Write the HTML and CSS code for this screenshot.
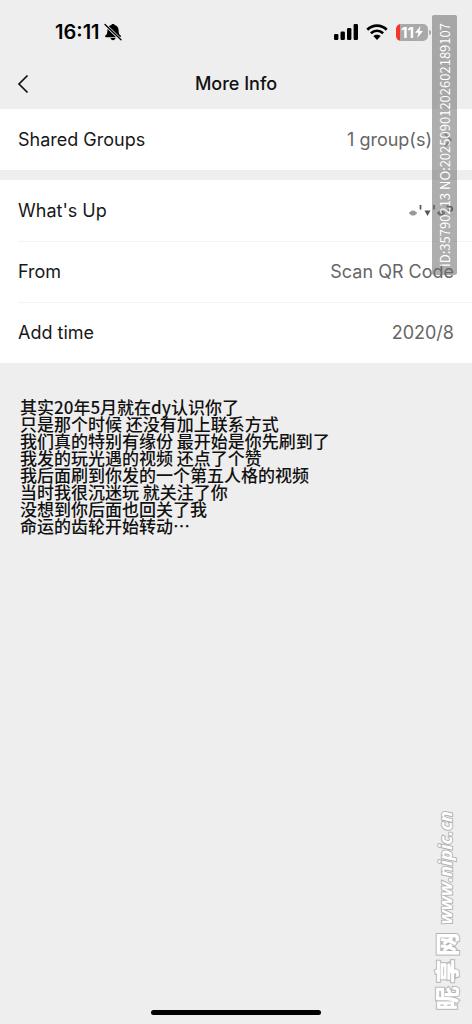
FILE: index.html
```html
<!DOCTYPE html>
<html lang="en">
<head>
<meta charset="utf-8">
<meta name="viewport" content="width=device-width, initial-scale=1">
<title>More Info</title>
<link rel="stylesheet" href="styles.css">
</head>
<body>
<div class="screen">
  <div class="status">
    <div class="status-group">
      <span class="clock">16:11</span>
      <svg class="bell" viewBox="0 0 18 18" width="18" height="18" aria-hidden="true">
        <path d="M9 1C8 1 7.400 1.500 7.300 2C4.600 2.700 3.400 4.800 3.400 7.300C3.400 10.500 2.800 11.500 1.400 12.500C.8 13.100 1 14.200 2 14.200H16C17 14.200 17.200 13.100 16.600 12.500C15.200 11.500 14.600 10.500 14.600 7.300C14.600 4.800 13.400 2.700 10.700 2C10.600 1.500 10 1 9 1Z"/>
        <path d="M6.500 15H11.500C11.200 16.400 10.300 17.200 9 17.200S6.800 16.400 6.500 15Z"/>
        <path d="M1 1.500L17 17" stroke="#eee" stroke-width="3"/>
        <path d="M1 1.500L17 16.800" stroke="#000" stroke-width="1.300" stroke-linecap="round"/>
      </svg>
    </div>
    <div class="status-group status-right">
      <svg viewBox="0 0 24 16" width="24" height="16" aria-hidden="true">
        <rect x="0" y="10" width="4.400" height="6" rx="1.200"/><rect x="6.500" y="7.500" width="4.400" height="8.500" rx="1.200"/><rect x="13" y="4" width="4.400" height="12" rx="1.200"/><rect x="19.600" y="0" width="4.400" height="16" rx="1.200"/>
      </svg>
      <svg viewBox="0 0 22 16" width="22" height="16" aria-hidden="true">
        <g fill="none" stroke="#000" stroke-width="2.700"><path d="M1.300 5.700C6.700.2 15.300.2 20.700 5.700"/><path d="M4.900 9.300C8.500 5.900 13.500 5.900 17.100 9.300"/></g>
        <path d="M7.300 12.100C9.400 10.200 12.600 10.200 14.700 12.100L11 15.900Z"/>
      </svg>
      <div class="battery"><span class="level">11</span><svg viewBox="0 0 8 12" width="8" height="12" aria-hidden="true"><path d="M5.500 0L0 6.800H3.400L2.300 12L8 4.900H4.600Z" fill="#fff"/></svg></div>
    </div>
  </div>
  <header class="nav">
    <button class="back" type="button" aria-label="Back"><svg viewBox="0 0 12 20" width="12" height="20" aria-hidden="true"><path d="M10.500 1.500L2 10L10.500 18.500" fill="none" stroke="#111" stroke-width="1.700"/></svg></button>
    <h1 class="title">More Info</h1>
  </header>
  <main>
    <div class="card">
      <a class="row" href="#groups"><span>Shared Groups</span><span class="value">1 group(s)<svg class="chevron" viewBox="0 0 8 14" width="8" height="14" aria-hidden="true"><path d="M1 1L7 7L1 13" fill="none" stroke="#999" stroke-width="1.800"/></svg></span></a>
    </div>
    <div class="card">
      <div class="row"><span>What's Up</span><span class="value">
        <svg viewBox="0 0 46 14" width="46" height="14" role="img" aria-label="Smiling face">
          <ellipse cx="5" cy="9" rx="3" ry="2.600" fill="#999"/><path d="M1 9H9" stroke="#999" stroke-width="1.500"/>
          <path d="M12.500 1V5.500M26 1V5.500" stroke="#555" stroke-width="1.700"/>
          <path d="M16.500 6.500H22.500L19.500 12Z" fill="#555"/>
          <ellipse cx="33" cy="9" rx="3" ry="2.600" fill="#666"/><path d="M29 9H37" stroke="#666" stroke-width="1.500"/>
          <path d="M38.500 2.500H42A2.200 2.200 0 1 1 40 5.500" fill="none" stroke="#444" stroke-width="1.700"/>
        </svg></span></div>
      <div class="row"><span>From</span><span class="value">Scan QR Code</span></div>
      <div class="row"><span>Add time</span><span class="value">2020/8</span></div>
    </div>
    <p class="note" lang="zh-CN">其实20年5月就在dy认识你了<br>只是那个时候 还没有加上联系方式<br>我们真的特别有缘份 最开始是你先刷到了<br>我发的玩光遇的视频 还点了个赞<br>我后面刷到你发的一个第五人格的视频<br>当时我很沉迷玩 就关注了你<br>没想到你后面也回关了我<br>命运的齿轮开始转动⋯</p>
  </main>
  <div class="home"></div>
  <div class="stamp">ID:35790213 NO:20250901202602189107</div>
  <div class="brand"><span class="brand-name" lang="zh-CN"><span>昵</span><span>享</span><span>网</span></span><span class="brand-url">www.nipic.cn</span></div>
</div>
</body>
</html>
```
FILE: styles.css
```css
* { box-sizing: border-box; }
body { margin: 0; background: #eee; color: #111; font-family: Inter, "Noto Sans CJK SC", sans-serif; }
.screen { position: relative; display: flex; flex-direction: column; min-height: 100vh; }
main { flex: 1; }
.status { display: flex; justify-content: space-between; align-items: center; height: 59px; padding: 5px 44px 0 55px; }
.status-group { display: flex; align-items: center; }
.status-right { gap: 8px; }
.clock { font-size: 20px; font-weight: 600; line-height: 24px; color: #000; }
.bell { margin-left: 4px; }
.battery { position: relative; display: flex; align-items: center; justify-content: center; gap: 1px; width: 32px; height: 17px; border-radius: 5px; background: linear-gradient(to right, #f5352c 4px, #a9a9a9 4px); color: #fff; }
.battery::after { content: ""; position: absolute; left: 33px; top: 6px; width: 2px; height: 5px; border-radius: 0 2px 2px 0; background: #a9a9a9; }
.level { font-size: 15px; font-weight: 700; line-height: 17px; }
.nav { display: grid; grid-template-columns: 1fr auto 1fr; align-items: center; height: 50px; padding: 0 17px; }
.back { justify-self: start; display: flex; padding: 0; border: 0; background: none; }
.title { margin: 0; font-size: 18px; font-weight: 500; line-height: 24px; }
.card { background: #fff; }
.card + .card { margin-top: 10px; }
.row { position: relative; display: flex; justify-content: space-between; align-items: center; height: 61px; padding: 0 18px; font-size: 18px; line-height: 24px; color: #181818; text-decoration: none; }
.row + .row::before { content: ""; position: absolute; top: 0; left: 18px; right: 0; border-top: 1px solid #f3f3f3; }
.value { display: flex; align-items: center; color: #666; }
.chevron { margin: 0 2px 0 12px; }
.note { margin: 35px 20px; font-family: "Noto Sans CJK SC", sans-serif; font-size: 17px; font-weight: 500; line-height: 17px; color: #111; }
.home { align-self: center; width: 36%; height: 5px; margin-bottom: 9px; border-radius: 3px; background: #000; }
.stamp { position: absolute; top: 15px; right: 15px; width: 25px; height: 260px; display: flex; align-items: center; justify-content: center; writing-mode: vertical-rl; transform: rotate(180deg); border-radius: 2px; background: rgba(110, 110, 110, .56); color: #fff; font-family: "Noto Sans CJK SC", sans-serif; font-size: 13px; line-height: 25px; white-space: nowrap; }
.brand { position: absolute; right: 14px; bottom: 14px; display: flex; align-items: center; gap: 8px; writing-mode: vertical-rl; transform: rotate(180deg); color: #fff; line-height: 25px; white-space: nowrap; -webkit-text-stroke: 2px #b4b4b4; paint-order: stroke fill; }
.brand-name { display: flex; gap: 3px; font-family: "Noto Sans CJK SC", sans-serif; font-size: 24px; font-weight: 900; text-orientation: sideways; }
.brand-url { font-family: "Open Sans", sans-serif; font-size: 18px; font-style: italic; font-weight: 700; }
```
